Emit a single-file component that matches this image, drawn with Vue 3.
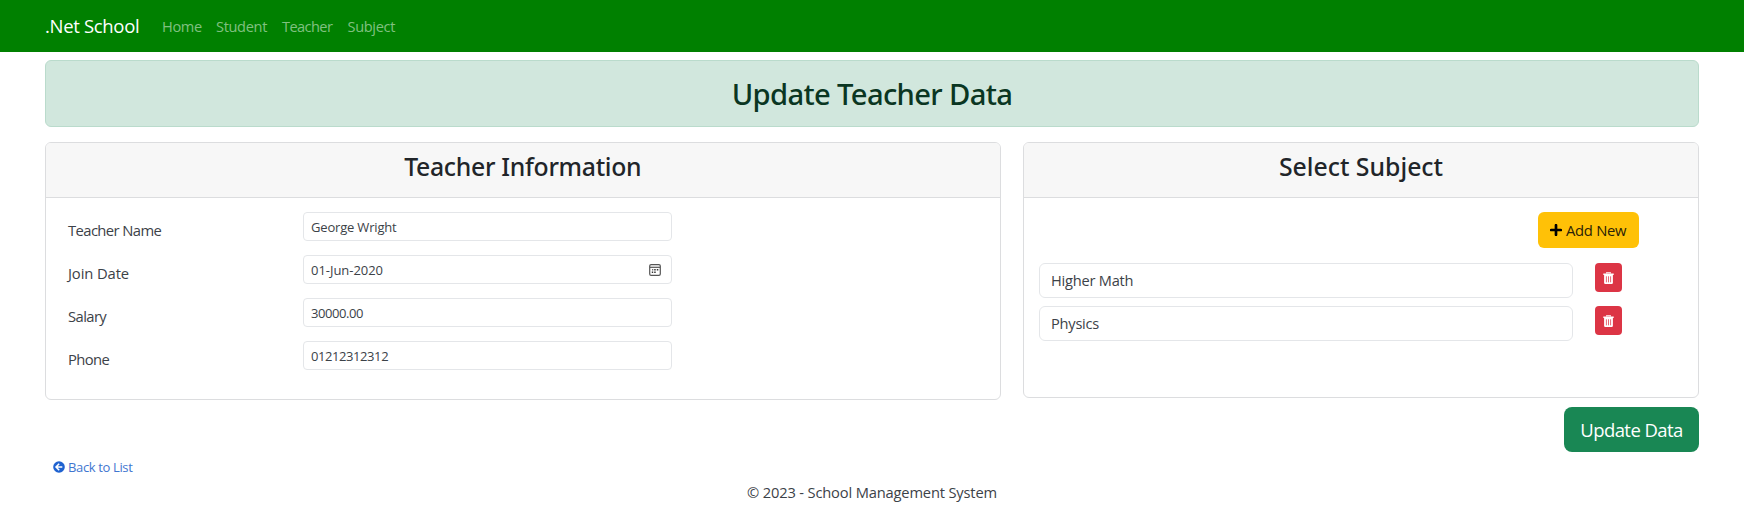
<script setup>
import { ref } from 'vue'

const links = ['Home', 'Student', 'Teacher', 'Subject']
const fields = ref([
  { id: 'name', label: 'Teacher Name', value: 'George Wright' },
  { id: 'date', label: 'Join Date', value: '01-Jun-2020', calendar: true },
  { id: 'salary', label: 'Salary', value: '30000.00' },
  { id: 'phone', label: 'Phone', value: '01212312312' },
])
const subjects = ref(['Higher Math', 'Physics'])
</script>

<template>
  <div class="page">
    <nav class="navbar">
      <a class="brand">.Net School</a>
      <a v-for="link in links" :key="link" class="nav-link" :class="'to-' + link.toLowerCase()">{{ link }}</a>
    </nav>

    <main class="container">
      <header class="alert"><h2>Update Teacher Data</h2></header>

      <div class="cards">
        <section class="card info">
          <div class="card-header"><h3>Teacher Information</h3></div>
          <div class="info-body">
            <div v-for="f in fields" :key="f.id" class="field" :class="f.id">
              <label><span>{{ f.label }}</span></label>
              <div class="input"><span>{{ f.value }}</span>
                <svg v-if="f.calendar" class="calendar" viewBox="0 0 12 12">
                  <rect x=".7" y=".7" width="10.6" height="10.6" rx="1.4" fill="none" stroke="#555" stroke-width="1.2" />
                  <path d="M1 3.3H11" stroke="#555" stroke-width="1.2" />
                  <path d="M5.2 5h1.5v1.4H5.2zM7.8 5h1.5v1.4H7.8zM2.8 7.6h1.4V9H2.8zM5.2 7.6h1.5V9H5.2zM3.3 5h.9v1.4h-.9z" fill="#333" />
                </svg>
              </div>
            </div>
          </div>
        </section>

        <section class="card subjects">
          <div class="card-header"><h3>Select Subject</h3></div>
          <div class="subject-body">
            <button class="add">
              <svg viewBox="0 0 12 12"><path d="M6 1.2V10.8M1.2 6H10.8" stroke="#000" stroke-width="2.7" stroke-linecap="round" /></svg>
              <span>Add New</span>
            </button>
            <div v-for="s in subjects" :key="s" class="subject-row">
              <div class="select"><span>{{ s }}</span></div>
              <button class="delete" aria-label="Remove">
                <svg viewBox="0 0 11 12">
                  <path d="M3.6 1.6V.7H7.4V1.6" fill="none" stroke="#fff" stroke-width="1.1" />
                  <path d="M.3 1.5H10.7V3H.3z" fill="#fff" />
                  <path d="M1.1 3H9.9V10.7a1.2 1.2 0 0 1-1.2 1.2H2.3a1.2 1.2 0 0 1-1.2-1.2z" fill="#fff" />
                  <path d="M3.4 4.3V10.3M5.5 4.3V10.3M7.6 4.3V10.3" stroke="#dc3545" stroke-width=".75" />
                </svg>
              </button>
            </div>
          </div>
        </section>
      </div>

      <div class="actions"><button class="update"><span>Update Data</span></button></div>

      <a class="back">
        <svg viewBox="0 0 12 12">
          <circle cx="6" cy="6" r="5.8" fill="#1f62d0" />
          <path d="M6.2 2.8L3 6L6.2 9.2M3.2 6H9.3" fill="none" stroke="#fff" stroke-width="1.5" />
        </svg>
        <span>Back to List</span>
      </a>
    </main>

    <footer>© 2023 - School Management System</footer>
  </div>
</template>

<style>
body { background: #fff; overflow: hidden; }
</style>

<style scoped>
.page {
  height: 532px;
  font-family: "Open Sans", "Noto Sans", sans-serif;
  font-size: 15px;
  line-height: 22px;
  color: #3c4248;
}
.page * { box-sizing: border-box; }
button { font: inherit; border: 0; padding: 0; }
svg { display: block; flex: none; }
span, a { white-space: nowrap; }

.navbar {
  height: 52px;
  background: #008000;
  display: flex;
  align-items: center;
  padding: 0 44px 0 45px;
}
.brand { width: 117px; color: #fff; font-size: 18.5px; letter-spacing: -.32px; }
.nav-link { color: #80c080; font-size: 14.6px; letter-spacing: -.35px; padding-bottom: 1px; }
.to-home { width: 54px; }
.to-student { width: 66px; }
.to-teacher { width: 65.5px; letter-spacing: -.6px; }

.container { padding: 8px 45px 0; }
.alert {
  height: 67px;
  border: 1px solid #badbcc;
  border-radius: 6px;
  background: #d1e7dd;
  display: flex;
  justify-content: center;
}
h2, h3 { margin: 0; font-family: "Noto Sans", sans-serif; font-weight: 500; white-space: nowrap; }
h2 { font-size: 29.2px; line-height: 36px; letter-spacing: -.65px; color: #0a3622; padding-top: 15px; }
h3 { font-size: 24.8px; line-height: 30px; letter-spacing: -.3px; color: #212529; padding-top: 8px; }

.cards {
  display: grid;
  grid-template-columns: 955.5px 676px;
  justify-content: space-between;
  align-items: start;
  margin-top: 15px;
}
.card { border: 1px solid #dcdddf; border-radius: 6px; overflow: hidden; }
.info { height: 258px; }
.subjects { height: 256px; }
.card-header {
  height: 55px;
  background: #f7f7f7;
  border-bottom: 1px solid #dcdddf;
  display: flex;
  justify-content: center;
}
.subjects h3 { letter-spacing: 0; }
.info-body { padding: 14px 22px; display: grid; gap: 14px; }
.field { display: grid; grid-template-columns: 235px 369px; height: 29px; }
label { padding-top: 8px; font-size: 14.8px; line-height: 21px; letter-spacing: -.6px; }
.date label { letter-spacing: -.12px; }
.input {
  height: 29px;
  border: 1px solid #e4e6e9;
  border-radius: 4px;
  display: flex;
  align-items: center;
  justify-content: space-between;
  padding: 0 10px 0 7px;
  font-size: 13px;
  letter-spacing: -.42px;
}
.name .input { letter-spacing: -.18px; }
.date .input { letter-spacing: -.04px; }
.calendar { width: 12px; height: 12px; }

.subject-body { padding: 14px 15px; display: flex; flex-direction: column; }
.add {
  width: 101px;
  height: 36px;
  margin: 0 44px 15px 0;
  align-self: flex-end;
  border-radius: 6px;
  background: #ffc107;
  color: #2a2208;
  display: flex;
  align-items: center;
  gap: 4px;
  padding-left: 12px;
  font-size: 14.8px;
  letter-spacing: -.28px;
}
.add svg { width: 12px; height: 12px; }
.subject-row { display: grid; grid-template-columns: 534px 27px; gap: 22px; height: 43px; }
.select {
  height: 35px;
  border: 1px solid #e4e6e9;
  border-radius: 6px;
  padding: 5px 11px;
  font-size: 14.6px;
  letter-spacing: -.22px;
}
.delete {
  width: 27px;
  height: 29px;
  border-radius: 4px;
  background: #dc3545;
  display: flex;
  align-items: center;
  justify-content: center;
}
.delete svg { width: 11px; height: 12px; }

.actions { display: flex; justify-content: flex-end; margin-top: 7px; }
.update {
  width: 135px;
  height: 45px;
  border-radius: 8px;
  background: #198754;
  color: #fff;
  font-size: 18.5px;
  letter-spacing: -.57px;
  padding-top: 1px;
}
.back {
  display: flex;
  align-items: center;
  gap: 3px;
  width: 90px;
  height: 20px;
  margin: 5px 0 0 8px;
  color: #3f76d0;
  font-size: 13px;
  letter-spacing: -.36px;
}
.back svg { width: 12px; height: 12px; }
footer { margin-top: 4px; text-align: center; font-size: 14.7px; line-height: 22px; letter-spacing: -.17px; }
</style>
